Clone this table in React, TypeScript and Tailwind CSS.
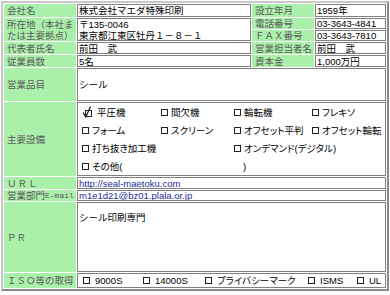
const label = "flex items-center bg-[#aaf0aa] pl-[3px] text-[#5a5a5a] text-[9.5px] leading-[11px] whitespace-nowrap";
const value = "flex items-center border border-[#7f7f7f] bg-white pl-[1px] text-black text-[9.5px] leading-[11px] whitespace-nowrap overflow-hidden";

function Box() {
    return <span className="inline-block h-[7px] w-[7px] shrink-0 border border-[#222]" />;
}

function Checked() {
    return (
        <svg width="12" height="12" viewBox="0 0 12 12" className="shrink-0">
            <rect x="3.5" y="4.5" width="6" height="6" fill="none" stroke="#222" strokeWidth="1" />
            <path d="M1 6.5 L3.8 11 L8.5 0.5" fill="none" stroke="#222" strokeWidth="1.3" />
        </svg>
    );
}

function Option({ text, checked = false }: { text: string; checked?: boolean }) {
    return (
        <span className="flex items-center gap-[2px] [font-feature-settings:'palt']">
            {checked ? <Checked /> : <Box />}
            <span className="pl-[1px]">{text}</span>
        </span>
    );
}

function Iso({ text }: { text: string }) {
    return (
        <span className="flex items-center gap-[5px] [font-feature-settings:'palt']">
            <Box />
            <span>{text}</span>
        </span>
    );
}

export default function App() {
    return (
        <div className="h-[295px] w-[390px] bg-white font-['Liberation_Sans','Noto_Sans_CJK_JP',sans-serif]">
            <div className="ml-px mt-px w-[388px] border-2 border-t-[#c8c8c8] border-l-[#c8c8c8] border-b-[#8a8a8a] border-r-[#8a8a8a] bg-white p-px">
                <div className="grid grid-cols-[72px_174px_62px_71px] grid-rows-[13px_11px_11px_12px_12px_33px_74px_12px_11px_70px_15px] gap-px">
                    {/* top block */}
                    <div className={label}>会社名</div>
                    <div className={value}>株式会社マエダ特殊印刷</div>
                    <div className={label}>設立年月</div>
                    <div className={value}>1959年</div>

                    <div className={`${label} row-span-2 flex-col items-start justify-center`}>
                        <span>所在地（本社ま</span>
                        <span>たは主要拠点）</span>
                    </div>
                    <div className={`${value} row-span-2 flex-col items-start justify-center`}>
                        <span>〒135-0046</span>
                        <span>東京都江東区牡丹１－８－１</span>
                    </div>
                    <div className={label}>電話番号</div>
                    <div className={value}>03-3643-4841</div>
                    <div className={label}>ＦＡＸ番号</div>
                    <div className={value}>03-3643-7810</div>

                    <div className={label}>代表者氏名</div>
                    <div className={value}>前田　武</div>
                    <div className={label}>営業担当者名</div>
                    <div className={value}>前田　武</div>

                    <div className={label}>従業員数</div>
                    <div className={value}>5名</div>
                    <div className={label}>資本金</div>
                    <div className={value}>1,000万円</div>

                    {/* wide rows */}
                    <div className={label}>営業品目</div>
                    <div className={`${value} col-span-3`}>シール</div>

                    <div className={label}>主要設備</div>
                    <div className={`${value} col-span-3 grid grid-cols-[79px_73px_78px_1fr] auto-rows-[18px] content-center items-center pl-[4px]`}>
                        <Option text="平圧機" checked />
                        <Option text="間欠機" />
                        <Option text="輪転機" />
                        <Option text="フレキソ" />
                        <Option text="フォーム" />
                        <Option text="スクリーン" />
                        <Option text="オフセット平判" />
                        <Option text="オフセット輪転" />
                        <div className="col-span-2">
                            <Option text="打ち抜き加工機" />
                        </div>
                        <div className="col-span-2">
                            <Option text="オンデマンド(デジタル)" />
                        </div>
                        <div className="col-span-2">
                            <Option text="その他(" />
                        </div>
                        <span className="pl-[9px]">)</span>
                    </div>

                    <div className={`${label} tracking-[1px]`}>ＵＲＬ</div>
                    <div className={`${value} col-span-3`}>
                        <a href="#" className="text-[#1c2a9c] underline">http://seal-maetoku.com</a>
                    </div>

                    <div className={label}>
                        営業部門<span className="font-['Liberation_Mono',monospace] text-[8px]">E-mail</span>
                    </div>
                    <div className={`${value} col-span-3`}>
                        <a href="#" className="text-[#1c2a9c] underline">m1e1d21@bz01.plala.or.jp</a>
                    </div>

                    <div className={label}>ＰＲ</div>
                    <div className={`${value} col-span-3 items-start pt-[9px] leading-[12px]`}>シール印刷専門</div>

                    <div className={label}>ＩＳＯ等の取得</div>
                    <div className={`${value} col-span-3 grid grid-cols-[60px_62px_103px_49px_1fr] items-center pl-[5px]`}>
                        <Iso text="9000S" />
                        <Iso text="14000S" />
                        <Iso text="プライバシーマーク" />
                        <Iso text="ISMS" />
                        <Iso text="UL" />
                    </div>
                </div>
            </div>
        </div>
    );
}
